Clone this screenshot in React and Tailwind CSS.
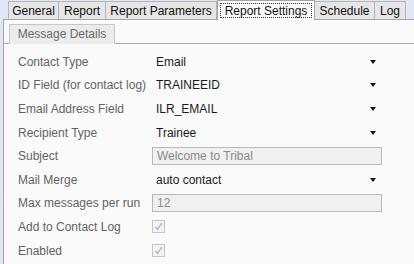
import React from 'react';

const tabs = [
  { name: 'General', w: 'w-[51px]' },
  { name: 'Report', w: 'w-[48px]' },
  { name: 'Report Parameters', w: 'w-[112px]' },
  { name: 'Report Settings', w: 'w-[98px]', active: true },
  { name: 'Schedule', w: 'w-[61px]' },
  { name: 'Log', w: 'w-[32px]' },
];

const rows = [
  { label: 'Contact Type', type: 'select', value: 'Email' },
  { label: 'ID Field (for contact log)', type: 'select', value: 'TRAINEEID' },
  { label: 'Email Address Field', type: 'select', value: 'ILR_EMAIL' },
  { label: 'Recipient Type', type: 'select', value: 'Trainee' },
  { label: 'Subject', type: 'input', value: 'Welcome to Tribal' },
  { label: 'Mail Merge', type: 'select', value: 'auto contact' },
  { label: 'Max messages per run', type: 'input', value: '12' },
  { label: 'Add to Contact Log', type: 'check' },
  { label: 'Enabled', type: 'check' },
];

function Field({ row }) {
  if (row.type === 'select') {
    return (
      <div className="flex items-center w-[230px] pl-[4px] text-[#1a1a1a]">
        <span className="flex-1">{row.value}</span>
        <span className="w-0 h-0 mr-[6px] border-l-[3.5px] border-r-[3.5px] border-t-[4px] border-l-transparent border-r-transparent border-t-[#111]" />
      </div>
    );
  }
  if (row.type === 'input') {
    return (
      <div className="flex items-center w-[230px] h-[18px] px-[4px] border border-[#b8b8b8] bg-[#f0f0f0] text-[#8a8a8a]">
        {row.value}
      </div>
    );
  }
  return (
    <div className="w-[13px] h-[13px] border border-[#c4c4c4] bg-[#f3f3f3] flex items-center justify-center">
      <svg width="9" height="9" viewBox="0 0 9 9">
        <path d="M1.5 5 L3.6 7.3 L7.8 1.2" fill="none" stroke="#a9b6d6" strokeWidth="1.4" />
      </svg>
    </div>
  );
}

export default function App() {
  return (
    <div className="w-[414px] h-[264px] overflow-hidden bg-[#dfe8f6] flex flex-col text-[12px] leading-none" style={{ fontFamily: '"Liberation Sans", Arial, sans-serif' }}>
      {/* Top tab bar */}
      <div className="flex items-end h-[19px] pl-[8px] shrink-0">
        {tabs.map((t) =>
          t.active ? (
            <div key={t.name} className={`${t.w} h-[20px] -mb-px relative z-10 bg-white border border-b-0 border-[#a5a5a5] flex items-center justify-center p-[2px]`}>
              <div className="w-full h-full border border-dotted border-[#333] flex items-center justify-center text-[#111]">
                {t.name}
              </div>
            </div>
          ) : (
            <div key={t.name} className={`${t.w} h-[18px] bg-[#e6e6e6] border border-b-0 border-[#b4b4b4] flex items-center justify-center text-[#111] -ml-px first:ml-0`}>
              {t.name}
            </div>
          )
        )}
      </div>

      {/* Panel */}
      <div className="flex-1 ml-[3px] border-l border-t border-[#a5a5a5] bg-[#fafafa] flex flex-col">
        <div className="flex items-end h-[24px] pl-[5px] border-b border-[#a9a9a9] shrink-0">
          <div className="h-[20px] w-[106px] -mb-px bg-[#ececec] border border-[#c8c8c8] border-b-[#ececec] flex items-center justify-center text-[#6a6a6a]">
            Message Details
          </div>
        </div>

        <div className="flex flex-col pt-[6px] pl-[14px]">
          {rows.map((row) => (
            <div key={row.label} className="flex items-center h-[23.6px]">
              <div className="w-[134px] text-[#636363]">{row.label}</div>
              <Field row={row} />
            </div>
          ))}
        </div>
      </div>
    </div>
  );
}
